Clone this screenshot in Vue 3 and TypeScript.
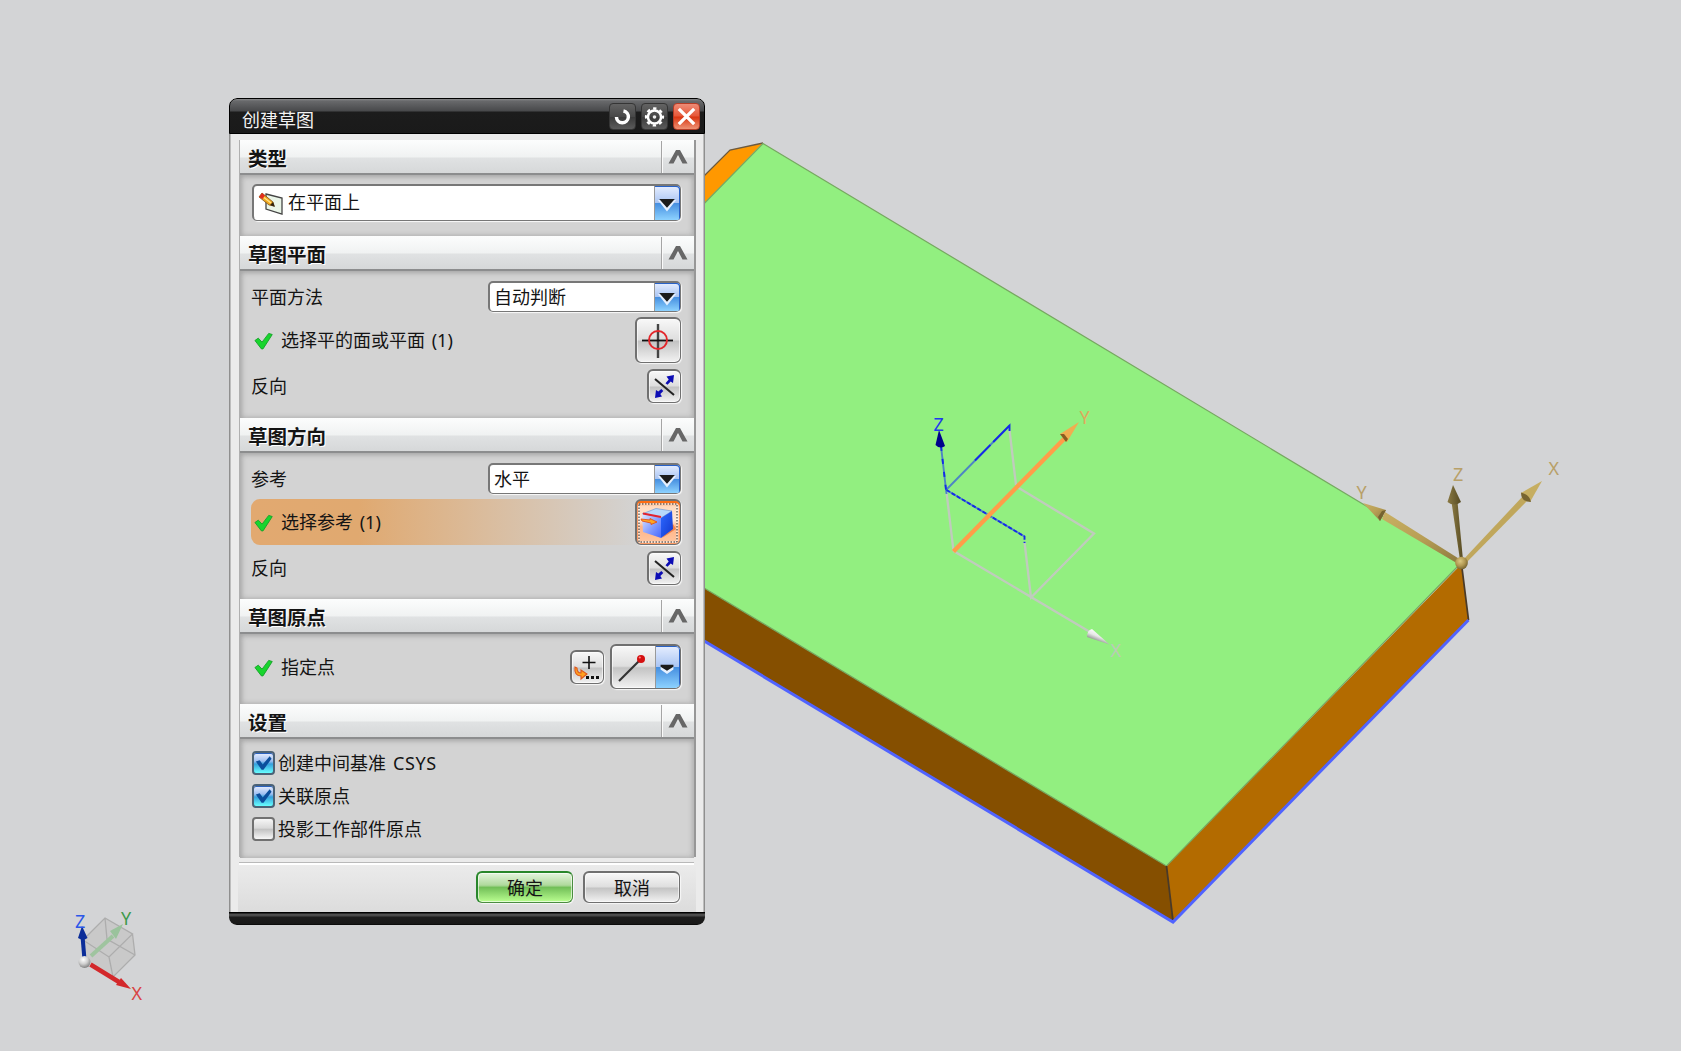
<script setup lang="ts">
import { ref } from 'vue'

interface Option { label: string; latin?: string; checked: boolean }

const options = ref<Option[]>([
  { label: '创建中间基准', latin: 'CSYS', checked: true },
  { label: '关联原点', checked: true },
  { label: '投影工作部件原点', checked: false },
])
</script>

<template>
  <main class="stage">
    <svg class="scene" viewBox="0 0 1681 1051" width="1681" height="1051">
      <defs>
        <linearGradient id="gold" x1="0" y1="0" x2="1" y2="1">
          <stop offset="0" stop-color="#c9b063" /><stop offset=".5" stop-color="#b89e55" /><stop offset="1" stop-color="#8a763d" />
        </linearGradient>
        <linearGradient id="darkgold">
          <stop offset="0" stop-color="#8a7943" /><stop offset=".5" stop-color="#706233" /><stop offset="1" stop-color="#564a22" />
        </linearGradient>
        <linearGradient id="silver" x1=".7" y1=".2" x2=".35" y2=".8">
          <stop offset="0" stop-color="#fff" /><stop offset=".5" stop-color="#e8e8e8" /><stop offset="1" stop-color="#858585" />
        </linearGradient>
        <radialGradient id="ballGold" cx=".4" cy=".35" r=".7">
          <stop offset="0" stop-color="#dcc882" /><stop offset=".55" stop-color="#af9650" /><stop offset="1" stop-color="#6d5c2c" />
        </radialGradient>
        <radialGradient id="ballGrey" cx=".4" cy=".3" r=".75">
          <stop offset="0" stop-color="#fff" /><stop offset=".5" stop-color="#cfcfcf" /><stop offset="1" stop-color="#777" />
        </radialGradient>
      </defs>

      <!-- solid block -->
      <polygon points="690,190 730,150 763,143 690,218" fill="#ff9800" />
      <polyline points="700,180 730,150 763,143" fill="none" stroke="#6b5a40" stroke-width="1.3" />
      <polygon points="763,143.5 1461,563 1166.5,866 690,579.5 690,218" fill="#92ef80" />
      <polygon points="690,579.5 1166.5,866 1173,922 690,632.5" fill="#854f00" />
      <polygon points="1166.5,866 1461.5,564 1468.5,620 1173,922" fill="#b36b00" />
      <path d="M690 218 763 143.5 1461 563 1166.5 866 690 579.5" fill="none" stroke="#76a860" stroke-width="1.2" />
      <path d="M1166.5 866 1173 921" stroke="#4a3a28" stroke-width="1.8" />
      <path d="M1461.5 564 1468.5 620" stroke="#4a3a28" stroke-width="1.8" />
      <path d="M690 632.5 1173 922 1468.5 620" fill="none" stroke="#5063ff" stroke-width="3" />

      <!-- sketch coordinate system -->
      <g fill="none" stroke="#c0cbbd" stroke-width="2.3">
        <path d="M953.5 551 946.5 492M953.5 551 1090 632M1009.5 430 1016 485M1018 487.5 1094 533.5 1031 597.5 1024.5 542" />
      </g>
      <g fill="none" stroke="#4d86c4" stroke-width="1.9">
        <path d="M941 446 946.5 494M946.5 489.5 1009.5 425.5M946.5 490 1024.5 536.5" />
      </g>
      <g fill="none" stroke="#142be6" stroke-width="1.9">
        <path d="M941 446 946.5 494" stroke-dasharray="5 8" />
        <path d="M975 460.5 1009.5 425.5V431" stroke-dasharray="22 4 30" />
        <path d="M946.5 490 1024.5 536.5V543" stroke-dasharray="4 2" />
      </g>
      <path d="M939 430 935.500 445Q940 449.500 945 446Z" fill="#00008b" />
      <path d="M953.5 551.5 1064 439" stroke="#ff9d49" stroke-width="4.4" />
      <path d="M1079 422 1060 434 1067 442Z" fill="#f0ad50" />
      <path d="M1060 434 1064 434 1068 439 1066 442Z" fill="#8b5c20" />
      <path d="M1109.5 644.5 1092 629Q1087 630 1087 637Z" fill="url(#silver)" />
      <g class="axis">
        <text x="933.5" y="431" fill="#2038ee">Z</text>
        <text x="1079.5" y="423.5" fill="#dfa95b">Y</text>
        <text x="1110.5" y="657" fill="#bccbb8">X</text>
      </g>

      <!-- datum coordinate system -->
      <path d="M1461 560 1385 512 1382 519 1460 565Z" fill="url(#gold)" />
      <path d="M1363 503 1386 510 1380 521Z" fill="url(#gold)" />
      <path d="M1386 510 1380 521 1378 517 1382 511Z" fill="#75632f" />
      <path d="M1460 560 1451.5 502H1457.5L1463 560Z" fill="url(#darkgold)" />
      <path d="M1453 485 1447.5 502Q1454 507 1461 502Z" fill="url(#darkgold)" />
      <path d="M1462 561 1523 496 1527 501 1465 564Z" fill="#c0a75c" />
      <path d="M1542 481 1521 493 1530 502Z" fill="#c6ae61" />
      <path d="M1521 492.5Q1521 502 1531 502Q1530 495 1521 492.5Z" fill="#776430" />
      <circle cx="1461.5" cy="563" r="6.3" fill="url(#ballGold)" />
      <g class="axis" fill="#b8a068">
        <text x="1356.5" y="499">Y</text>
        <text x="1453" y="480.500">Z</text>
        <text x="1548.5" y="475">X</text>
      </g>

      <!-- view triad -->
      <path d="M105 918 132.5 934 135 955 113 977 86 959 83 940Z" fill="#c9c9c9" />
      <path d="M105 918 132.5 934 109 957 83 940ZM109 957 113 977 135 955 132.5 934M105 918 107 939 135 955" fill="none" stroke="#adadad" stroke-width="1.3" />
      <path d="M91 956 113 936" stroke="#9fc49f" stroke-width="4" />
      <path d="M123 924 110 931 116 939Z" fill="#9ac39c" />
      <path d="M84.5 960 82.5 936" stroke="#0b2d99" stroke-width="4" />
      <path d="M82 926 78 938Q83 941 87.5 938Z" fill="#0b2d99" />
      <circle cx="84.5" cy="962" r="6" fill="url(#ballGrey)" />
      <path d="M90.5 964.5 119 982" stroke="#d3282b" stroke-width="4.5" />
      <path d="M131 989 121 978 116 985Z" fill="#d3282b" />
      <g class="axis">
        <text x="75" y="928" fill="#2c57e8">Z</text>
        <text x="121" y="925" fill="#3e9a4b">Y</text>
        <text x="131.5" y="1000" fill="#d94343">X</text>
      </g>
    </svg>

    <section class="dialog">
      <header class="titlebar">
        <span class="title">创建草图</span>
        <button class="tool">
          <svg viewBox="0 0 26 26"><path d="M14 7.2A6.2 6.2 0 1 1 6.7 13.5" fill="none" stroke="#fff" stroke-width="3.6" /></svg>
        </button>
        <button class="tool">
          <svg viewBox="0 0 26 26">
            <circle cx="13" cy="13.5" r="6.8" fill="none" stroke="#fff" stroke-width="2.6" />
            <circle cx="13" cy="13.5" r="8.8" fill="none" stroke="#fff" stroke-width="2.4" stroke-dasharray="3.5 3.412" stroke-dashoffset="1.75" />
            <circle cx="13" cy="13.5" r="1.9" fill="#eee" />
          </svg>
        </button>
        <button class="tool close">
          <svg viewBox="0 0 26 26"><path d="m5 5 16 16M21 5 5 21" stroke="#fff" stroke-width="3.4" /></svg>
        </button>
      </header>

      <div class="content">
        <div class="head">
          <h2>类型</h2>
          <span class="fold"><svg viewBox="0 0 20 16"><path d="M.5 14.5 8 1H12L19.500 14.500H14.500L10 6 5.500 14.500Z" /></svg></span>
        </div>
        <div class="body type-body">
          <div class="combo wide">
            <svg class="sketch-icon" viewBox="0 0 26 24">
              <path d="m8 3 16 4v16L8 18Z" fill="#eaf5e8" stroke="#444" stroke-width="1.3" />
              <path d="m4 2 11 9 1 4-5-1L1 6Z" fill="#f0a81e" stroke="#6b400b" stroke-width=".7" />
              <path d="M1 6 4 2 7 4.5 4.5 8Z" fill="#e22d1f" />
              <path d="m6 6.5 7 5.5" stroke="#ffe48a" stroke-width="1.3" />
              <path d="m12 14 5 2-2-5Z" fill="#33240f" />
            </svg>
            <span>在平面上</span>
            <i class="drop"><svg viewBox="0 0 24 16"><path d="M2 3h20l-10 12.5Z" fill="#e5f0ff" /><path d="M3.5 2h17L12 11.5Z" fill="#1b1b1b" /></svg></i>
          </div>
        </div>

        <div class="head">
          <h2>草图平面</h2>
          <span class="fold"><svg viewBox="0 0 20 16"><path d="M.5 14.5 8 1H12L19.500 14.500H14.500L10 6 5.500 14.500Z" /></svg></span>
        </div>
        <div class="body plane-body">
          <div class="row short">
            <span class="label">平面方法</span>
            <div class="combo">
              <span>自动判断</span>
              <i class="drop"><svg viewBox="0 0 24 16"><path d="M2 3h20l-10 12.5Z" fill="#e5f0ff" /><path d="M3.5 2h17L12 11.5Z" fill="#1b1b1b" /></svg></i>
            </div>
          </div>
          <div class="row tall">
            <svg class="tick" viewBox="0 0 20 18"><path d="m1 8.5 3.5-2.500 4 4.200 7-9.200 3.700 1.200L9.500 17.300H7.800Z" fill="#18d52d" stroke="#18a32c" stroke-width="1" /></svg>
            <span class="label">选择平的面或平面 (1)</span>
            <button class="btn big">
              <svg viewBox="0 0 45 45">
                <path d="M23 6v34" stroke="#444" stroke-width="2.4" /><path d="M7 22.5h31" stroke="#111" stroke-width="1.8" />
                <circle cx="23" cy="22" r="9" fill="none" stroke="#e3262b" stroke-width="1.9" />
              </svg>
            </button>
          </div>
          <div class="row flip">
            <span class="label">反向</span>
            <button class="btn small">
              <svg viewBox="0 0 33 33"><path d="m8 9 19 16" stroke="#222" stroke-width="2" /><path d="m27 5-1 8-2.300-1.500-3.200 3.300-2-1.500 3.200-3.800L19.500 6.500ZM8 28l1-8 2.300 1.500 3-2.500 2 2-3 3 1.700 2.500Z" fill="#0c0cb4" /></svg>
            </button>
          </div>
        </div>

        <div class="head">
          <h2>草图方向</h2>
          <span class="fold"><svg viewBox="0 0 20 16"><path d="M.5 14.5 8 1H12L19.500 14.500H14.500L10 6 5.500 14.500Z" /></svg></span>
        </div>
        <div class="body direction-body">
          <div class="row short">
            <span class="label">参考</span>
            <div class="combo">
              <span>水平</span>
              <i class="drop"><svg viewBox="0 0 24 16"><path d="M2 3h20l-10 12.5Z" fill="#e5f0ff" /><path d="M3.5 2h17L12 11.5Z" fill="#1b1b1b" /></svg></i>
            </div>
          </div>
          <div class="row tall active">
            <svg class="tick" viewBox="0 0 20 18"><path d="m1 8.5 3.5-2.500 4 4.200 7-9.200 3.700 1.200L9.500 17.300H7.800Z" fill="#18d52d" stroke="#18a32c" stroke-width="1" /></svg>
            <span class="label">选择参考 (1)</span>
            <button class="btn big picked">
              <svg viewBox="0 0 45 45">
                <defs>
                  <linearGradient id="cubeL" x1="0" y1="0" x2="1" y2="1"><stop offset="0" stop-color="#dfe8ff" /><stop offset=".5" stop-color="#8ba2ff" /><stop offset="1" stop-color="#4468ff" /></linearGradient>
                  <linearGradient id="cubeR" x1="0" y1="0" x2="1" y2="1"><stop offset="0" stop-color="#2c69ff" /><stop offset="1" stop-color="#1337ce" /></linearGradient>
                </defs>
                <path d="M38 24 41 29 27 38Z" fill="#ef824b" />
                <path d="M7 14 21 8.5 37 11 26 18Z" fill="#b6d9fb" stroke="#7399d2" stroke-width=".7" />
                <path d="M7 14 26 18V38L8 32Z" fill="url(#cubeL)" />
                <path d="M26 18 37 11 38 29 26 38Z" fill="url(#cubeR)" />
                <path d="M8 13.5 26 17" stroke="#e22330" stroke-width="2" />
                <path d="M6 19 15 20V18.5L22 22 16 24.5V23L7 21Z" fill="#ffa820" stroke="#e2501c" stroke-width=".9" />
                <rect x="4" y="4" width="38" height="38" fill="none" stroke="#fff" />
                <rect x="4" y="4" width="38" height="38" fill="none" stroke="#222" stroke-dasharray="1.5 1.5" />
              </svg>
            </button>
          </div>
          <div class="row flip">
            <span class="label">反向</span>
            <button class="btn small">
              <svg viewBox="0 0 33 33"><path d="m8 9 19 16" stroke="#222" stroke-width="2" /><path d="m27 5-1 8-2.300-1.500-3.200 3.300-2-1.500 3.200-3.800L19.500 6.500ZM8 28l1-8 2.300 1.500 3-2.500 2 2-3 3 1.700 2.500Z" fill="#0c0cb4" /></svg>
            </button>
          </div>
        </div>

        <div class="head">
          <h2>草图原点</h2>
          <span class="fold"><svg viewBox="0 0 20 16"><path d="M.5 14.5 8 1H12L19.500 14.500H14.500L10 6 5.500 14.500Z" /></svg></span>
        </div>
        <div class="body origin-body">
          <div class="row origin">
            <svg class="tick" viewBox="0 0 20 18"><path d="m1 8.5 3.5-2.500 4 4.200 7-9.200 3.700 1.200L9.500 17.300H7.800Z" fill="#18d52d" stroke="#18a32c" stroke-width="1" /></svg>
            <span class="label">指定点</span>
            <button class="btn small">
              <svg viewBox="0 0 33 33">
                <path d="M12.5 11.5h13M19 5v13" stroke="#111" stroke-width="1.6" />
                <path d="M17 26.5h3m2 0h3m2 0h3" transform="translate(-1)" stroke="#111" stroke-width="3" />
                <path d="M5 16Q4 25 11 25V28L17 23 11 19V22Q7 22 7 17Z" fill="#ffa01e" stroke="#db5520" stroke-width="1.1" />
              </svg>
            </button>
            <button class="btn split">
              <svg class="line-icon" viewBox="0 0 45 45"><path d="M9 37 31 15" stroke="#333" stroke-width="2.2" /><circle cx="31" cy="15" r="4" fill="#d50f0f" /><circle cx="29.8" cy="13.5" r="1.1" fill="#ff8585" /></svg>
              <i class="drop"><svg viewBox="0 0 24 16"><path d="M5 6h14v3l-7 5-7-5Z" fill="#e5f0ff" /><path d="M5 4h14v2L12 10.5 5 6Z" fill="#1b1b1b" /></svg></i>
            </button>
          </div>
        </div>

        <div class="head">
          <h2>设置</h2>
          <span class="fold"><svg viewBox="0 0 20 16"><path d="M.5 14.5 8 1H12L19.500 14.500H14.500L10 6 5.500 14.500Z" /></svg></span>
        </div>
        <div class="body settings-body">
          <div v-for="o in options" :key="o.label" class="option" @click="o.checked = !o.checked">
            <span class="check" :class="{ on: o.checked }">
              <svg v-if="o.checked" viewBox="0 0 20 20"><path d="m2 8.5 4-1.500 3.200 4.500L16.500 3l2 2.500L10 17H8Z" fill="#0b4e9c" /></svg>
            </span>
            <span class="label">{{ o.label }}<span v-if="o.latin" class="latin">{{ o.latin }}</span></span>
          </div>
        </div>
      </div>

      <div class="rule"></div>
      <footer class="actions">
        <button class="action ok">确定</button>
        <button class="action cancel">取消</button>
      </footer>
      <div class="base"></div>
    </section>
  </main>
</template>

<style>
body { margin: 0; overflow: hidden; background: #d3d4d6; }
</style>

<style scoped>
.stage { position: relative; width: 1681px; height: 1051px; overflow: hidden; background: #d3d4d6; font-family: "Noto Sans", "Noto Sans CJK SC", sans-serif; font-size: 18px; color: #141414; }
.scene { display: block; }
.axis { font-family: "Noto Sans", sans-serif; font-size: 18px; font-weight: 400; }
button { padding: 0; margin: 0; border: 0; font: inherit; color: inherit; display: block; }
svg { display: block; }
.dialog { position: absolute; left: 229px; top: 98px; width: 476px; height: 827px; display: flex; flex-direction: column; background: linear-gradient(90deg, #8f8f8f 1px, #ebebeb 2px, #ebebeb 474px, #8f8f8f 475px); border-radius: 8px; overflow: hidden; }
.titlebar { box-sizing: border-box; height: 36px; flex: none; display: flex; align-items: flex-start; gap: 5px; padding: 4px 4px 0 13px; border: 1px solid #000; border-radius: 8px 8px 0 0; background: linear-gradient(#8a8a8c 0, #68696b 2px, #48494b 12px, #1c1c1c 13px, #1a1a1a 100%); }
.title { flex: 1; color: #f2f2f2; line-height: 28px; padding-top: 3px; margin-left: -1px; }
.tool { box-sizing: border-box; width: 27px; height: 27px; border: 1px solid #353535; border-radius: 4px; background: linear-gradient(#636363, #484848 50%, #3a3a3a 51%, #5b5b5b); }
.tool svg { width: 25px; height: 25px; }
.close { border-color: #b63c26; background: linear-gradient(#ee8b76, #e65839 48%, #d93612 52%, #ee9274); }
.content { margin: 6px 9px 0 10px; height: 717px; flex: none; border-right: 2px solid #979797; border-left: 1px solid #b0b0b0; }
.head { box-sizing: border-box; height: 35px; display: flex; border-bottom: 2px solid #8c8d8e; background: linear-gradient(#fcfdfd 0, #f0f2f2 52%, #e0e2e3 54%, #d6d8d9 100%); }
.head h2 { flex: 1; margin: 0; padding-left: 8px; font-size: 19.5px; font-weight: 700; line-height: 37px; text-shadow: 1px 1px #fff; }
.fold { box-sizing: border-box; width: 33px; margin-top: 1px; border-left: 1px solid #a5a5a5; box-shadow: inset 1px 0 #fafafa; padding: 8px 0 0 6px; }
.fold svg { width: 20px; height: 16px; fill: #676767; }
.body { box-sizing: border-box; background: #d3d3d3; box-shadow: inset 3px 3px 5px -1px #a6a6a6, inset -3px -2px 5px -1px #b2b2b2; padding: 10px 13px 0 11px; display: flex; flex-direction: column; }
.type-body { height: 61px; padding-top: 9px; padding-left: 12px; }
.plane-body { height: 147px; }
.direction-body { height: 146px; }
.origin-body { height: 70px; }
.settings-body { height: 119px; padding-top: 12px; padding-left: 12px; gap: 9px; }
.row { display: flex; align-items: center; }
.label { flex: 1; line-height: 24px; white-space: nowrap; word-spacing: 2px; }
.latin { letter-spacing: .6px; margin-left: 7px; }
.short { height: 31px; }
.tall { height: 46px; margin-top: 5px; border-radius: 9px; }
.active { background: linear-gradient(90deg, #e2a970 0%, #e0a970 25%, #d3d3d3 90%); }
.flip { height: 33px; margin-top: 6px; }
.origin { height: 45px; }
.tick { width: 19px; height: 18px; margin: 0 8px 0 3px; position: relative; top: 1px; }
.combo { box-sizing: border-box; width: 193px; height: 31px; display: flex; align-items: center; background: #fff; border: 2px solid #777; border-bottom-width: 1px; border-right-width: 1px; border-radius: 5px; box-shadow: 1px 1px 1px #fafafa; padding-left: 4px; }
.combo span { flex: 1; line-height: 27px; }
.combo.wide { width: 429px; height: 37px; }
.wide span { position: relative; top: -1px; }
.sketch-icon { width: 26px; height: 24px; margin-right: 4px; }
.drop { box-sizing: border-box; width: 26px; align-self: stretch; display: flex; align-items: center; justify-content: center; border-left: 1px solid #999; border-radius: 0 3px 3px 0; background: linear-gradient(#e6eeff, #aac5f3 49%, #468fe0 51%, #8dd2ff); box-shadow: inset -1px 1px #2862c8; }
.drop svg { width: 22px; height: 15px; position: relative; top: 1px; left: -1px; }
.btn, .action { box-sizing: border-box; flex: none; border: 2px solid #707070; border-right-width: 1px; border-bottom-width: 1px; border-radius: 6px; background: linear-gradient(#f8f8f8, #dedede 48%, #c3c3c3 52%, #f2f2f2); box-shadow: 1px 1px 1px #f8f8f8, inset 0 0 0 1px #fff9; }
.big { width: 46px; height: 46px; align-self: flex-end; }
.small { width: 34px; height: 34px; }
.btn > svg { width: 45px; height: 45px; margin: -2px; }
.small > svg { width: 33px; height: 33px; }
.picked { background: linear-gradient(#ff6d12 0, #ffd9bd 12%, #ffe8d8 45%, #ffb487 60%, #ffc7a2); box-shadow: 1px 1px 1px #f8f8f8, inset 0 2px #ff6d12, inset 0 0 0 1px #ff9a62; }
.split { display: flex; width: 71px; height: 45px; margin-left: 6px; overflow: hidden; }
.split .line-icon { flex: none; margin-right: 0; width: 45px; }
.split .drop { width: 25px; height: 42px; flex: none; }
.option { display: flex; align-items: center; height: 24px; }
.check { box-sizing: border-box; width: 23px; height: 24px; border: 2px solid #717171; border-radius: 4px; background: linear-gradient(#f6f6f6, #d9d9d9 45%, #c3c3c3 52%, #f7f7f7); margin-right: 3px; }
.check.on { border-color: #4b6276; background: linear-gradient(#e9efff, #9fbff1 40%, #35a0dc 55%, #67ffff); box-shadow: inset 0 1px #2a62c0; }
.check svg { width: 19px; height: 20px; }
.rule { height: 3px; margin: 5px 11px 0 10px; flex: none; box-sizing: border-box; border-top: 1px solid #b9b9b9; border-bottom: 2px solid #fff; }
.actions { height: 47px; flex: none; margin: 0 9px; display: flex; justify-content: flex-end; gap: 10px; padding: 6px 16px 0 0; box-sizing: border-box; background: linear-gradient(#ebebeb, #dcdcdc); }
.action { width: 97px; height: 32px; line-height: 30px; text-align: center; }
.ok { border-color: #28862b #4b8c40 #4b8c40 #28862b; background: linear-gradient(#e5f5df, #afd99c 42%, #72bf58 50%, #bbff91); }
.base { flex: 1; background: linear-gradient(#000 0, #000 1px, #505050 2px, #484848 4px, #1d1d1d 5px, #181818 12px, #000); border-radius: 0 0 7px 7px; }
</style>
